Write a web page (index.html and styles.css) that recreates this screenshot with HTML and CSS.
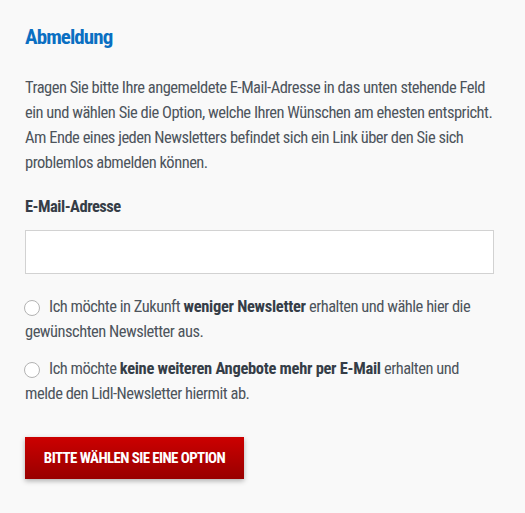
FILE: index.html
```html
<!DOCTYPE html>
<html lang="de">
<head>
  <meta charset="UTF-8">
  <meta name="viewport" content="width=device-width, initial-scale=1.0">
  <title>Abmeldung</title>
  <link rel="stylesheet" href="styles.css">
</head>
<body>
  <div class="container">
    <h2 class="title">Abmeldung</h2>
    <p class="intro">Tragen Sie bitte Ihre angemeldete E-Mail-Adresse in das unten stehende Feld ein und wählen Sie die Option, welche Ihren Wünschen am ehesten entspricht. Am Ende eines jeden Newsletters befindet sich ein Link über den Sie sich problemlos abmelden können.</p>

    <label class="field-label" for="email">E-Mail-Adresse</label>
    <input class="field" type="email" id="email">

    <div class="options">
      <label class="option"><span class="radio"></span>Ich möchte in Zukunft <b>weniger Newsletter</b> erhalten und wähle hier die gewünschten Newsletter aus.</label>
      <label class="option"><span class="radio"></span>Ich möchte <b>keine weiteren Angebote mehr per E-Mail</b> erhalten und melde den Lidl-Newsletter hiermit ab.</label>
    </div>

    <button class="submit">Bitte wählen Sie eine Option</button>
  </div>
</body>
</html>
```

FILE: styles.css
```css
body { margin: 0; background: #f9f9f9; font-family: "Roboto Condensed", "Roboto", sans-serif; color: #4d545c; letter-spacing: -0.5px; }
.container { padding: 25px 25px 30px 25px; width: 470px; }
.title { margin: 0 0 26px 0; font-size: 21px; color: #0a6fc2; font-weight: bold; line-height: 24px; letter-spacing: -0.9px; }
.intro { margin: 0 0 20px 0; font-size: 16.5px; line-height: 25px; }
.field-label { display: block; font-weight: bold; font-size: 16.5px; color: #353d47; line-height: 24px; margin-bottom: 11px; }
.field { display: block; box-sizing: border-box; width: 469px; height: 44px; border: 1px solid #d2d2d2; background: #fff; margin: 0 0 20px 0; }
.option { display: block; font-size: 16.5px; line-height: 25px; margin-bottom: 12px; }
.option b { color: #353d47; letter-spacing: -0.3px; }
.radio { display: inline-block; box-sizing: border-box; width: 16px; height: 16px; border: 1px solid #b3b3b3; border-radius: 50%; background: #fff; vertical-align: -4px; margin: 0 9px 0 -1px; }
.submit { display: block; margin-top: 31px; width: 219px; height: 42px; padding: 0; border: 0; background: linear-gradient(#cc0000, #980000); color: #fff; font-family: inherit; font-weight: bold; font-size: 15px; letter-spacing: -0.6px; text-transform: uppercase; box-shadow: 0 2px 5px rgba(0,0,0,0.3); }
```
